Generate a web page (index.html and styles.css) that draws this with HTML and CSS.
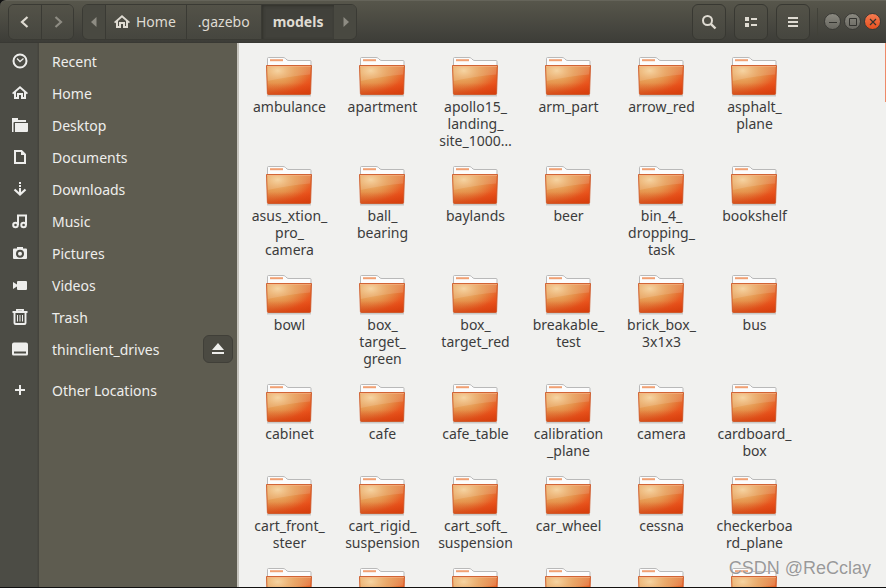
FILE: index.html
```html
<!DOCTYPE html>
<html lang="en">
<head>
<meta charset="utf-8">
<meta name="viewport" content="width=device-width, initial-scale=1">
<title>models</title>
<link rel="stylesheet" href="styles.css">
</head>
<body>
<svg class="defs" aria-hidden="true">
  <defs>
    <linearGradient id="front" x1="0" y1="0" x2="1" y2="1">
      <stop offset="0" stop-color="#e9944f"/><stop offset=".5" stop-color="#e3793a"/><stop offset=".78" stop-color="#e9531c"/><stop offset="1" stop-color="#dc4210"/>
    </linearGradient>
    <radialGradient id="glow" cx=".25" cy=".18" r=".75">
      <stop offset="0" stop-color="#f6d29a" stop-opacity=".95"/><stop offset=".5" stop-color="#e8b062" stop-opacity=".55"/><stop offset="1" stop-color="#e8a050" stop-opacity="0"/>
    </radialGradient>
    <linearGradient id="shade" x1="0" y1="0" x2="0" y2="1">
      <stop offset=".6" stop-color="#d63c0c" stop-opacity="0"/><stop offset="1" stop-color="#d03a0a" stop-opacity=".65"/>
    </linearGradient>
    <symbol id="folder" viewBox="1 0 48 44">
      <path d="M2 41.5h44" stroke="#000" stroke-opacity=".16" stroke-width="2"/>
      <path d="M2.500 13V4.500q0-1 1-1H18q1.500 0 2.500 1l1.500 1.500q.7.500 2 .5h21q1 0 1 1V13z" fill="#fcfcfc" stroke="#b9b9b9"/>
      <path d="M5 5.200h13v2H5z" fill="#f0a073"/>
      <path d="M1.500 11.500h45L45.600 39.500q0 1-1 1H3.400q-1 0-1-1z" fill="url(#front)"/>
      <path d="M1.500 11.500h45L45.600 39.500q0 1-1 1H3.400q-1 0-1-1z" fill="url(#glow)"/>
      <path d="M1.500 11.500h45L45.600 39.500q0 1-1 1H3.400q-1 0-1-1z" fill="url(#shade)" stroke="#cb5526" stroke-opacity=".85"/>
      <path d="M2.500 12.500h43l-.4 8Q25 22 2.800 27z" fill="#fff" fill-opacity=".13"/>
      <path d="M2 12.500h44" stroke="#f8b98e" stroke-opacity=".6"/>
    </symbol>
    <symbol id="home" viewBox="0 0 16 16"><path d="M8 1 0 8l1.200 1.300L2 8.600V14h5v-4h2v4h5V8.600l.8.700L16 8zM8 3.600l4 3.500V12h-1V8H5v4H4V7.100z" fill-rule="evenodd" fill="currentColor"/></symbol>
  </defs>
</svg>

<div class="window">
  <header class="bar">
    <div class="group">
      <button class="btn step" aria-label="Back"><svg viewBox="0 0 16 16"><path d="M10.500 3 5 8l5.500 5" fill="none" stroke="currentColor" stroke-width="2.200"/></svg></button>
      <button class="btn step dim" aria-label="Forward"><svg viewBox="0 0 16 16"><path d="m5.500 3L11 8l-5.500 5" fill="none" stroke="currentColor" stroke-width="2.200"/></svg></button>
    </div>
    <nav class="group path" aria-label="Path">
      <button class="btn arrow dim" aria-label="Earlier folders"><svg viewBox="0 0 16 16"><path d="M10.500 3v10L5 8z" fill="currentColor"/></svg></button>
      <button class="btn crumb"><svg viewBox="0 0 16 16"><use href="#home"/></svg>Home</button>
      <button class="btn crumb">.gazebo</button>
      <button class="btn crumb current" aria-current="page">models</button>
      <button class="btn arrow dim" aria-label="Later folders"><svg viewBox="0 0 16 16"><path d="M5.500 3v10L11 8z" fill="currentColor"/></svg></button>
    </nav>
    <div class="tools">
      <button class="btn tool" aria-label="Search"><svg viewBox="0 0 16 16"><circle cx="6.500" cy="6.500" r="4.500" fill="none" stroke="currentColor" stroke-width="2"/><path d="m9.800 9.800 4.700 4.700" stroke="currentColor" stroke-width="2.400"/></svg></button>
      <button class="btn tool" aria-label="List view"><svg viewBox="0 0 16 16"><path d="M2 3h4v4H2zM2 9h4v4H2zM8 4h6v2H8zM8 10h6v2H8z" fill="currentColor"/></svg></button>
      <button class="btn tool" aria-label="Menu"><svg viewBox="0 0 16 16"><path d="M3 3h10v2H3zM3 7h10v2H3zM3 11h10v2H3z" fill="currentColor"/></svg></button>
    </div>
    <div class="controls">
      <button class="round" aria-label="Minimize"><svg viewBox="0 0 16 16"><path d="M4 8.500h8" stroke="currentColor"/></svg></button>
      <button class="round" aria-label="Maximize"><svg viewBox="0 0 16 16"><path d="M4.500 4.500h7v7h-7z" fill="none" stroke="currentColor"/></svg></button>
      <button class="round close" aria-label="Close"><svg viewBox="0 0 16 16"><path d="m5 5 6 6M11 5l-6 6" stroke="currentColor" stroke-width="1.200"/></svg></button>
    </div>
  </header>

  <div class="content">
    <nav class="places" aria-label="Places">
      <a class="place" href="#"><svg viewBox="0 0 16 16"><circle cx="8" cy="8" r="6.500" fill="none" stroke="currentColor" stroke-width="2"/><path d="m5 5.500 3 3 3.500-3" fill="none" stroke="currentColor" stroke-width="1.300"/></svg><span>Recent</span></a>
      <a class="place" href="#"><svg viewBox="0 0 16 16"><use href="#home"/></svg><span>Home</span></a>
      <a class="place" href="#"><svg viewBox="0 0 16 16"><path d="M0 1h6v2h8v2H2.500q-1 0-1 1v9H0zM3 6h13v8q0 1-1 1H3z" fill="currentColor"/></svg><span>Desktop</span></a>
      <a class="place" href="#"><svg viewBox="0 0 16 16"><path d="M3 2h6.500L13 5.500V14H3z" fill="none" stroke="currentColor" stroke-width="2"/><path d="M9 2v4h4z" fill="currentColor"/></svg><span>Documents</span></a>
      <a class="place" href="#"><svg viewBox="0 0 16 16"><path d="M7 1h2v2H7zM7 4h2v2H7zM7 7h2v5H7z" fill="currentColor"/><path d="m2.500 8.500L8 13.500l5.500-5" fill="none" stroke="currentColor" stroke-width="2.200"/></svg><span>Downloads</span></a>
      <a class="place" href="#"><svg viewBox="0 0 16 16"><path d="M6 12V2.500h8V12" fill="none" stroke="currentColor" stroke-width="2"/><circle cx="3.500" cy="12" r="2.300" fill="none" stroke="currentColor" stroke-width="2"/><circle cx="11.600" cy="12" r="2.300" fill="none" stroke="currentColor" stroke-width="2"/></svg><span>Music</span></a>
      <a class="place" href="#"><svg viewBox="0 0 16 16"><path d="M5 2h6v1.500h3q1 0 1 1V13q0 1-1 1H2q-1 0-1-1V4.500q0-1 1-1h3zM8 4.700a4 4 0 1 0 0 8 4 4 0 0 0 0-8zm0 2a2 2 0 1 1 0 4 2 2 0 0 1 0-4z" fill-rule="evenodd" fill="currentColor"/></svg><span>Pictures</span></a>
      <a class="place" href="#"><svg viewBox="0 0 16 16"><path d="M6 4h8q1 0 1 1v7q0 1-1 1H6q-1 0-1-1V9.500L1 12V5l4 2.500V5q0-1 1-1z" fill="currentColor"/></svg><span>Videos</span></a>
      <a class="place" href="#"><svg viewBox="0 0 16 16"><path d="M5 2V.800h6V2M.500 3h15M2.500 4v10q0 1 1 1h9q1 0 1-1V4" fill="none" stroke="currentColor" stroke-width="1.900"/><path d="M5.500 6v6.500M8 6v6.500M10.500 6v6.500" stroke="currentColor"/></svg><span>Trash</span></a>
      <div class="mount">
        <a class="place" href="#"><svg viewBox="0 0 16 16"><path d="M2 1.500h12q2 0 2 2V13q0 1.500-1.500 1.500h-13Q0 14.500 0 13V3.500q0-2 2-2zM2 10.500v2h12v-2z" fill-rule="evenodd" fill="currentColor"/></svg><span>thinclient_drives</span></a>
        <button class="eject" aria-label="Eject"><svg viewBox="0 0 16 16"><path d="M8 2 2 9h12zM2 11h12v2H2z" fill="currentColor"/></svg></button>
      </div>
      <a class="place other" href="#"><svg viewBox="0 0 16 16"><path d="M8 3v10M3 8h10" stroke="currentColor" stroke-width="2"/></svg><span>Other Locations</span></a>
    </nav>

    <main class="files">
      <ul class="grid">
        <li><svg><use href="#folder"/></svg>ambulance</li>
        <li><svg><use href="#folder"/></svg>apartment</li>
        <li><svg><use href="#folder"/></svg>apollo15_<br>landing_<br>site_1000…</li>
        <li><svg><use href="#folder"/></svg>arm_part</li>
        <li><svg><use href="#folder"/></svg>arrow_red</li>
        <li><svg><use href="#folder"/></svg>asphalt_<br>plane</li>
        <li><svg><use href="#folder"/></svg>asus_xtion_<br>pro_<br>camera</li>
        <li><svg><use href="#folder"/></svg>ball_<br>bearing</li>
        <li><svg><use href="#folder"/></svg>baylands</li>
        <li><svg><use href="#folder"/></svg>beer</li>
        <li><svg><use href="#folder"/></svg>bin_4_<br>dropping_<br>task</li>
        <li><svg><use href="#folder"/></svg>bookshelf</li>
        <li><svg><use href="#folder"/></svg>bowl</li>
        <li><svg><use href="#folder"/></svg>box_<br>target_<br>green</li>
        <li><svg><use href="#folder"/></svg>box_<br>target_red</li>
        <li><svg><use href="#folder"/></svg>breakable_<br>test</li>
        <li><svg><use href="#folder"/></svg>brick_box_<br>3x1x3</li>
        <li><svg><use href="#folder"/></svg>bus</li>
        <li><svg><use href="#folder"/></svg>cabinet</li>
        <li><svg><use href="#folder"/></svg>cafe</li>
        <li><svg><use href="#folder"/></svg>cafe_table</li>
        <li><svg><use href="#folder"/></svg>calibration<br>_plane</li>
        <li><svg><use href="#folder"/></svg>camera</li>
        <li><svg><use href="#folder"/></svg>cardboard_<br>box</li>
        <li><svg><use href="#folder"/></svg>cart_front_<br>steer</li>
        <li><svg><use href="#folder"/></svg>cart_rigid_<br>suspension</li>
        <li><svg><use href="#folder"/></svg>cart_soft_<br>suspension</li>
        <li><svg><use href="#folder"/></svg>car_wheel</li>
        <li><svg><use href="#folder"/></svg>cessna</li>
        <li><svg><use href="#folder"/></svg>checkerboa<br>rd_plane</li>
        <li><svg><use href="#folder"/></svg></li>
        <li><svg><use href="#folder"/></svg></li>
        <li><svg><use href="#folder"/></svg></li>
        <li><svg><use href="#folder"/></svg></li>
        <li><svg><use href="#folder"/></svg></li>
        <li><svg><use href="#folder"/></svg></li>
      </ul>
      <div class="scroll"></div>
    </main>
  </div>
  <div class="credit">CSDN @ReCclay</div>
</div>
</body>
</html>
```
FILE: styles.css
```css
* { box-sizing: border-box; }

body {
  margin: 0;
  background: #111;
  font: 14px/17px "Noto Sans", "Open Sans", sans-serif;
}

button { font: inherit; color: inherit; padding: 0; }
svg { width: 16px; height: 16px; flex: none; display: block; }
.defs { position: absolute; width: 0; height: 0; }

.window {
  position: relative;
  display: flex;
  flex-direction: column;
  height: 100vh;
  overflow: hidden;
  border-bottom: 1px solid #111;
}

/* Title bar */
.bar {
  display: flex;
  align-items: center;
  flex: none;
  height: 43px;
  padding: 0 5px 0 8px;
  color: #dfdbd2;
  background: linear-gradient(#57564b, #3d3d38);
  border-top: 1px solid #65645a;
  border-bottom: 1px solid #393934;
  border-top-left-radius: 6px;
}

.group {
  display: flex;
  height: 36px;
  border: 1px solid #3a3a34;
  border-radius: 6px;
  overflow: hidden;
}

.path { margin-left: 8px; }

.btn {
  display: flex;
  align-items: center;
  justify-content: center;
  gap: 6px;
  border: 0;
  background: linear-gradient(#535248, #46463f);
}

.group .btn + .btn { border-left: 1px solid #3a3a34; }
.step { width: 32px; }
.arrow { width: 22px; }
.crumb { padding: 0 10px 0 8px; }
.crumb:not(:has(svg)) { padding: 0 11px; }
.dim { color: #8e8c83; }
.group .btn.arrow { background: #494941; }

.group .btn.current {
  font-weight: 700;
  background: #41413b;
  box-shadow: inset 1px 1px 3px #30302b;
}

.group .current + .arrow { border-left-color: #494941; }

.tools { display: flex; gap: 8px; margin-left: auto; }

.tool {
  width: 34px;
  height: 36px;
  border: 1px solid #383832;
  border-radius: 6px;
}

.controls {
  display: flex;
  align-items: center;
  gap: 3px;
  height: 28px;
  margin-left: 7px;
  padding-left: 6px;
  border-left: 1px solid #414139;
}

.round {
  display: grid;
  place-items: center;
  width: 17px;
  height: 17px;
  border: 1px solid #3a3a36;
  border-radius: 50%;
  color: #33332f;
  background: linear-gradient(#8a8980, #696861);
}

.round.close { background: linear-gradient(#f47b50, #e6501f); }

/* Places */
.content { display: flex; flex: 1; min-height: 0; }

.places {
  width: 239px;
  flex: none;
  padding-top: 2px;
  color: #eeeeec;
  background: linear-gradient(90deg, #4c4c45 0 37px, #45443d 38px 39px, #5e5c50 39px);
  border-right: 2px solid #c6c4bd;
}

.place {
  display: flex;
  align-items: center;
  gap: 24px;
  height: 32px;
  padding-left: 12px;
  color: inherit;
  text-decoration: none;
}

.mount {
  display: flex;
  align-items: center;
  justify-content: space-between;
  padding-right: 4px;
}

.eject {
  display: grid;
  place-items: center;
  width: 30px;
  height: 28px;
  border: 1px solid #403f38;
  border-radius: 6px;
  background: #4b4a42;
}

.other { margin-top: 9px; }

/* Folder icons */
.files {
  display: flex;
  flex: 1;
  min-width: 0;
  overflow: hidden;
  color: #3c3c3c;
  background: #f1f1ef;
}

.grid {
  display: grid;
  flex: 1;
  grid-template-columns: repeat(auto-fill, 93px);
  align-content: start;
  row-gap: 14px;
  margin: 0;
  padding: 11px 0 0 4px;
  list-style: none;
  text-align: center;
}

.grid svg { width: 48px; height: 44px; margin: 0 auto; }

.scroll { width: 1px; height: 59px; background: #ee8a68; }

.credit {
  position: absolute;
  right: 15px;
  bottom: 8px;
  font: 18px/22px "Liberation Sans", Arial, sans-serif;
  color: #999;
  text-shadow: 0 0 1px #fff;
}
```
